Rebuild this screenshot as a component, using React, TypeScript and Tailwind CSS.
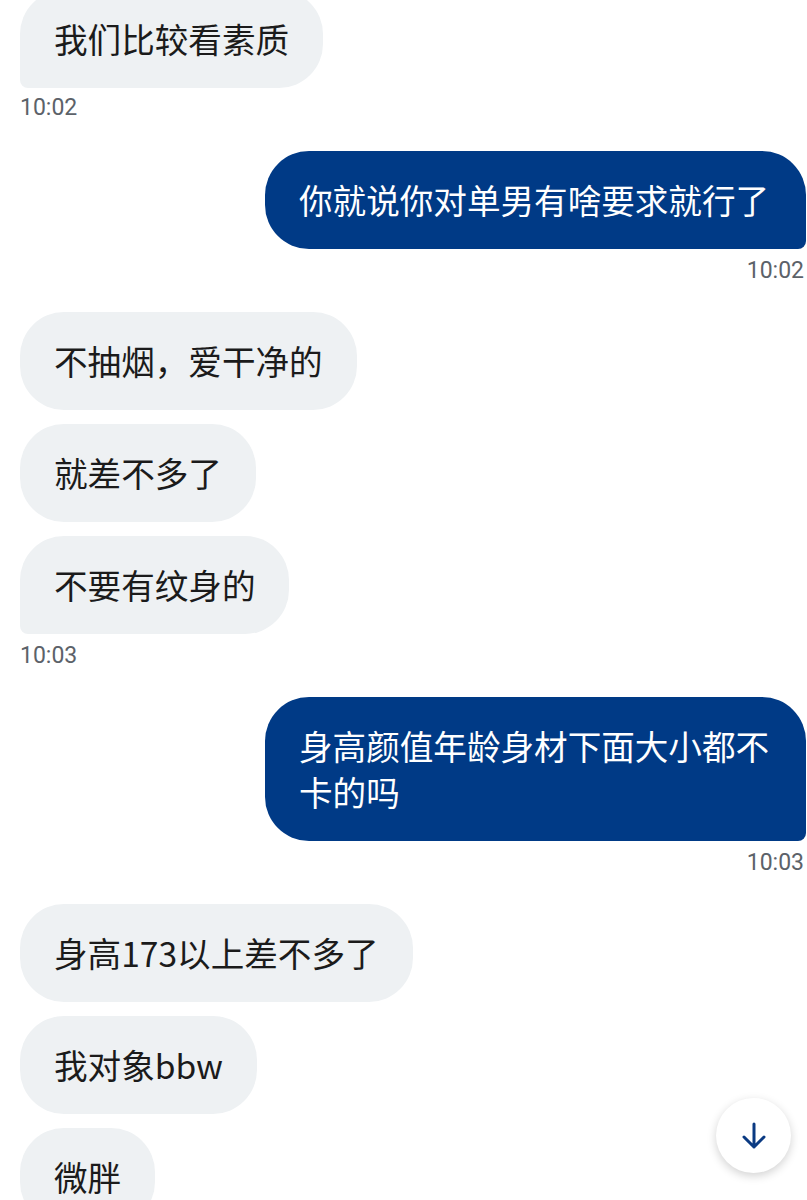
import React from 'react'

type Msg = {
  text: string
  last?: boolean
}

const cjk = { fontFamily: '"Noto Sans CJK SC", "Noto Sans", sans-serif' }
const latin = { fontFamily: 'Roboto, "Liberation Sans", sans-serif' }

function Received({ text, last }: Msg) {
  return (
    <div className="flex justify-start">
      <div
        style={cjk}
        className={`bg-[#eef1f3] text-[#1b1b1b] text-[33.6px] leading-[46px] px-[34px] py-[26px] rounded-[44px] ${
          last ? 'rounded-bl-[8px]' : ''
        }`}
      >
        {text}
      </div>
    </div>
  )
}

function Sent({ text }: Msg) {
  return (
    <div className="flex justify-end">
      <div
        style={cjk}
        className="bg-[#003a86] text-white text-[33.6px] leading-[46px] pl-[34px] pr-[30px] py-[26px] rounded-[44px] rounded-br-[8px] w-[541px]"
      >
        {text}
      </div>
    </div>
  )
}

function Time({ t, right }: { t: string; right?: boolean }) {
  return (
    <div
      style={latin}
      className={`text-[23px] leading-[28px] text-[#5c6269] ${right ? 'text-right pr-[2px]' : 'pl-[20px]'}`}
    >
      {t}
    </div>
  )
}

export default function App() {
  return (
    <div className="relative w-[807px] h-[1200px] overflow-hidden bg-white">
      <div className="flex flex-col pl-[20px] pr-[1px] -mt-[10px]">
        <Received text="我们比较看素质" last />
        <div className="-ml-[20px] mt-[6px]">
          <Time t="10:02" />
        </div>

        <div className="mt-[29px]">
          <Sent text="你就说你对单男有啥要求就行了" />
        </div>
        <div className="mt-[8px]">
          <Time t="10:02" right />
        </div>

        <div className="mt-[27px] flex flex-col gap-[14px]">
          <Received text="不抽烟，爱干净的" />
          <Received text="就差不多了" />
          <Received text="不要有纹身的" last />
        </div>
        <div className="-ml-[20px] mt-[8px]">
          <Time t="10:03" />
        </div>

        <div className="mt-[27px]">
          <Sent text="身高颜值年龄身材下面大小都不卡的吗" />
        </div>
        <div className="mt-[8px]">
          <Time t="10:03" right />
        </div>

        <div className="mt-[27px] flex flex-col gap-[14px]">
          <Received text="身高173以上差不多了" />
          <Received text="我对象bbw" />
          <Received text="微胖" />
        </div>
      </div>

      {/* scroll to bottom */}
      <button className="absolute left-[716px] top-[1098px] w-[75px] h-[75px] rounded-full bg-white shadow-[0_3px_10px_rgba(0,0,0,0.18)] flex items-center justify-center">
        <svg width="24" height="28" viewBox="0 0 24 28" fill="none">
          <path
            d="M12 2v23M2 15l10 10 10-10"
            stroke="#0a3a82"
            strokeWidth="3"
            strokeLinecap="round"
            strokeLinejoin="round"
          />
        </svg>
      </button>
    </div>
  )
}
